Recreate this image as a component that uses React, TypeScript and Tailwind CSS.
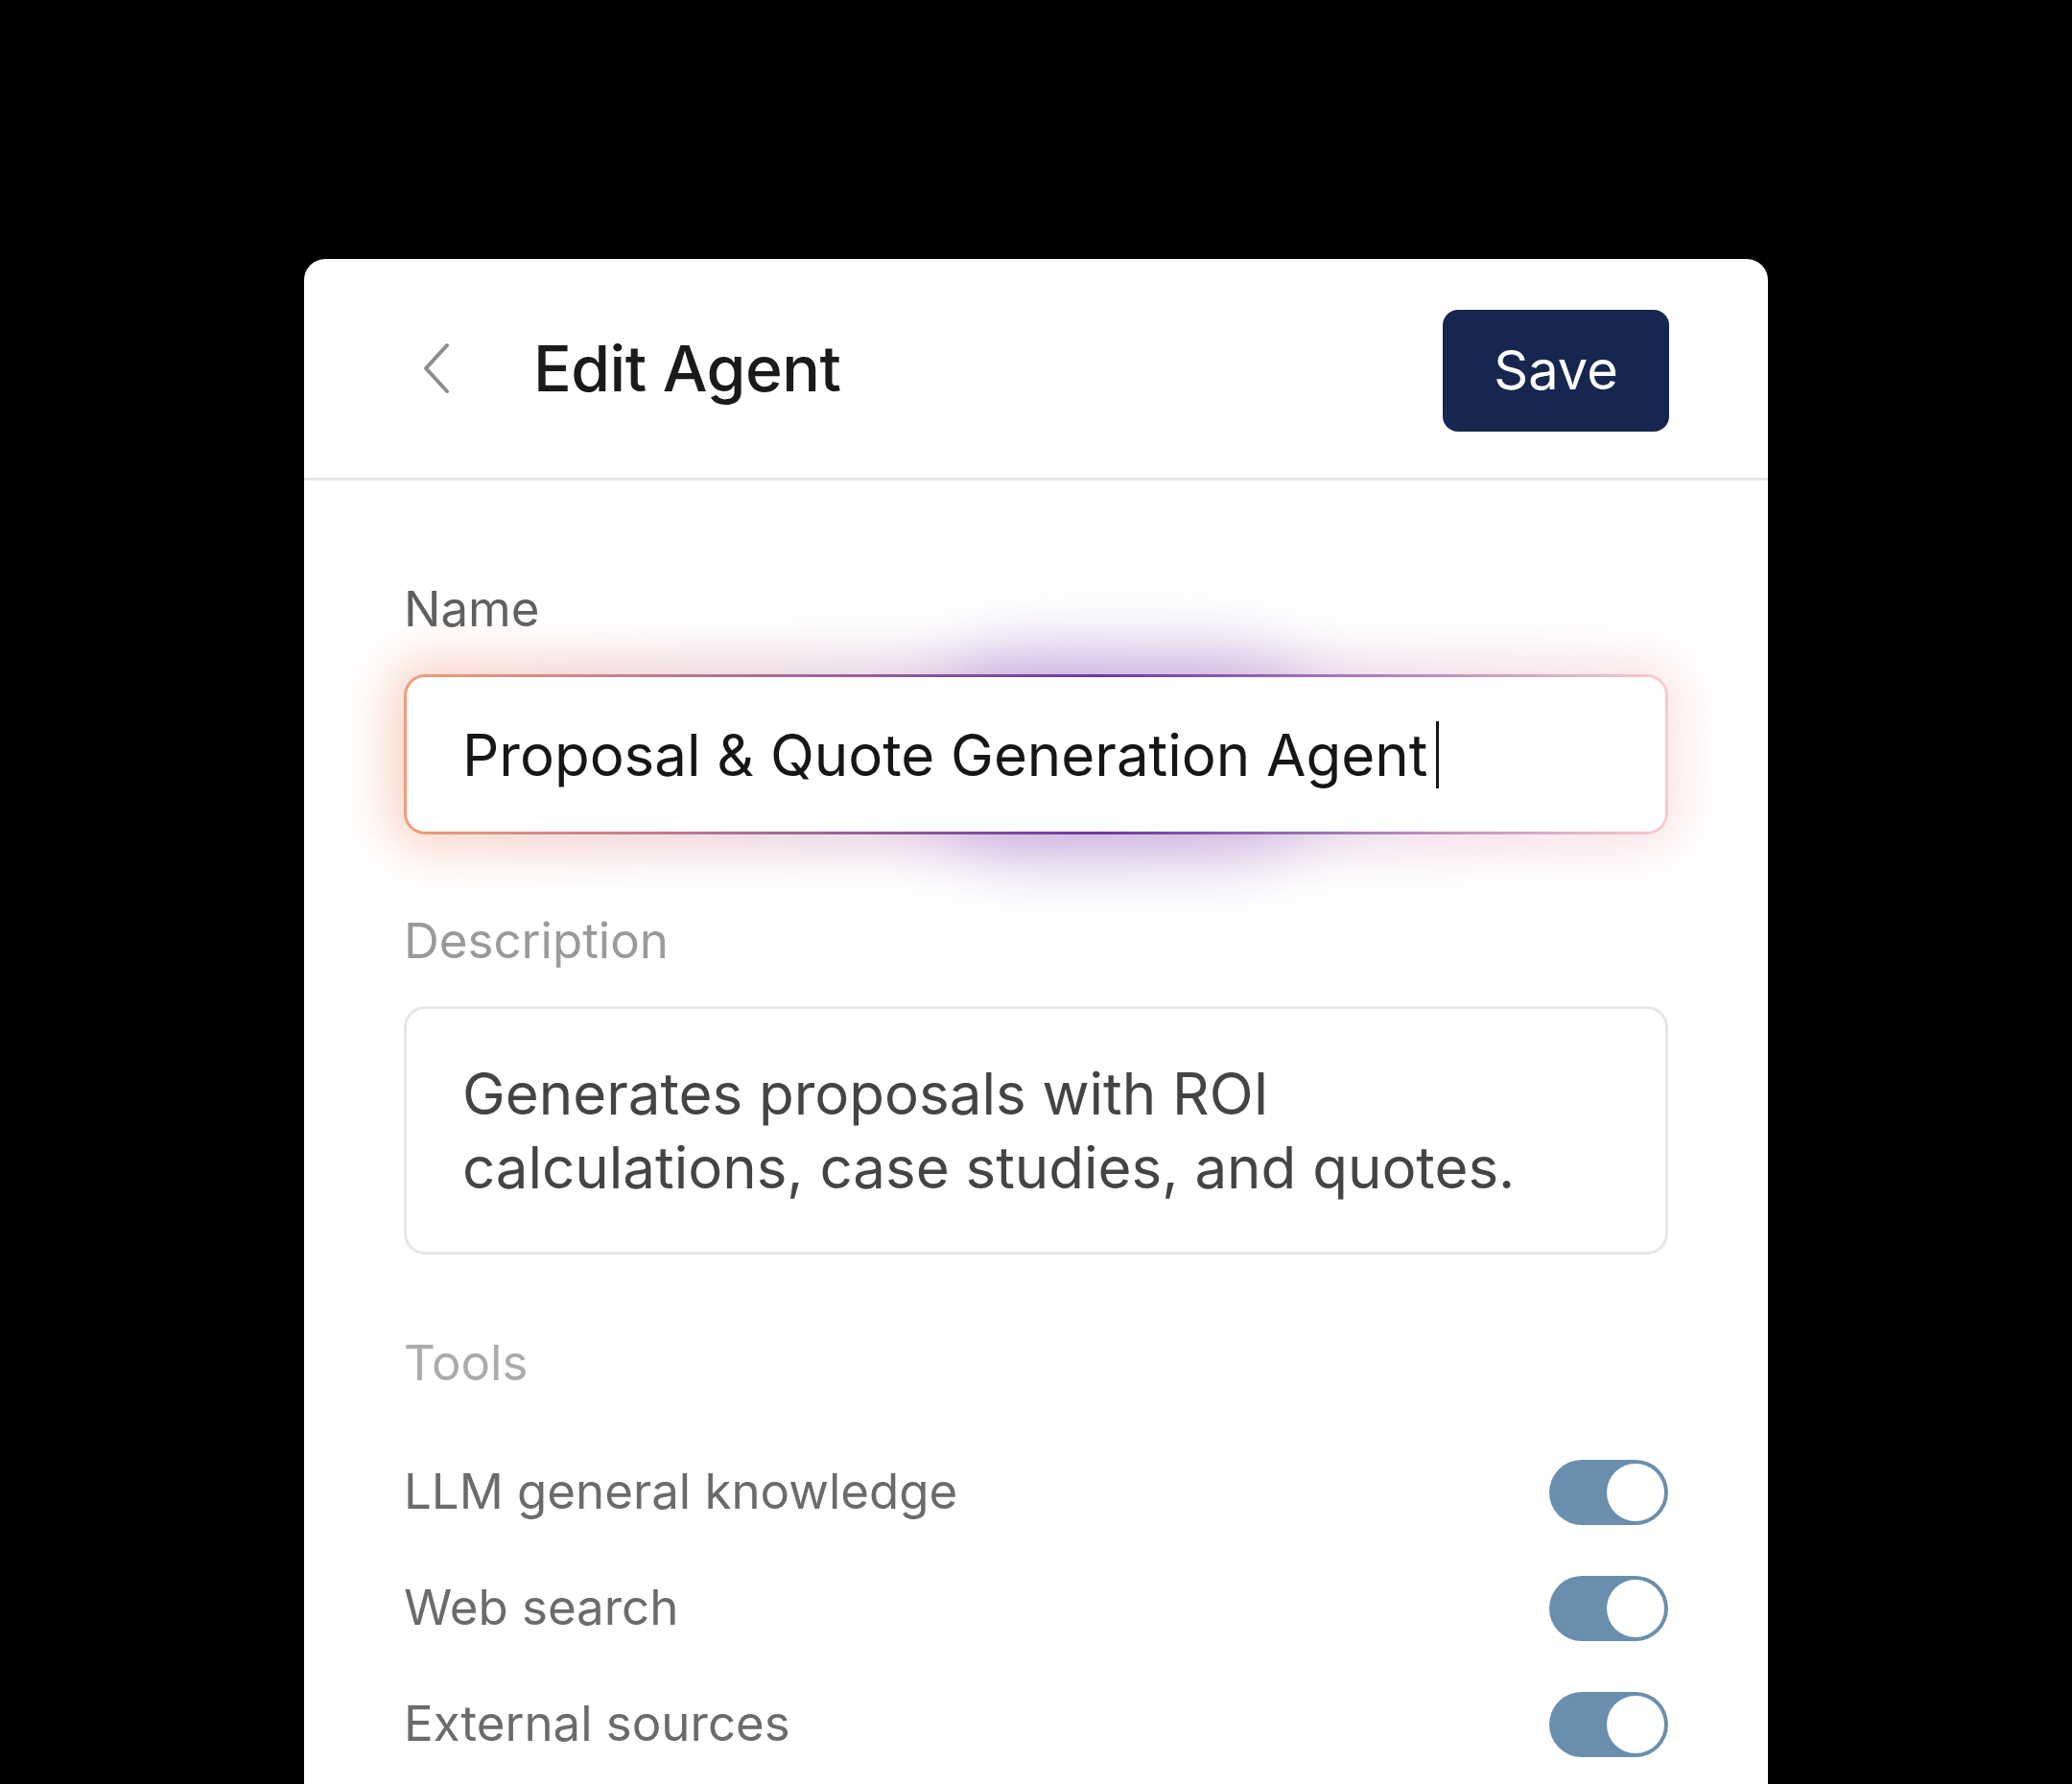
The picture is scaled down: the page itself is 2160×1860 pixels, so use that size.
import React from 'react';

const font = { fontFamily: 'Inter, "Noto Sans", sans-serif' };

/* ── Toggle ───────────────────────────────────────────── */
function Toggle() {
  return (
    <div className="flex h-[68px] w-[124px] items-center justify-end rounded-full bg-[#6a8fae] pr-[4px]">
      <div className="h-[60px] w-[60px] rounded-full bg-white" />
    </div>
  );
}

/* ── Chevron ──────────────────────────────────────────── */
function BackChevron() {
  return (
    <svg width="32" height="56" viewBox="0 0 32 56" fill="none">
      <path d="M28 4 L6 28 L28 52" stroke="#8c8c8c" strokeWidth="4" strokeLinecap="round" strokeLinejoin="round" />
    </svg>
  );
}

const tools = ['LLM general knowledge', 'Web search', 'External sources'];

/* ── Page ─────────────────────────────────────────────── */
export default function App() {
  return (
    <div className="h-[1860px] w-[2160px] overflow-hidden bg-black pt-[270px]" style={font}>
      <div className="mx-auto min-h-[1700px] w-[1526px] rounded-t-[22px] bg-white">
        {/* header */}
        <div className="flex h-[231px] items-center border-b-[3px] border-[#e6e6e6] pl-[121px] pr-[103px]">
          <BackChevron />
          <h1 className="ml-[86px] flex-1 text-[66px] font-medium leading-none tracking-[-0.5px] text-[#1a1a1a]">
            Edit Agent
          </h1>
          <button className="mt-[4px] flex h-[127px] w-[236px] items-center justify-center rounded-[16px] bg-[#17264f] text-[56px] text-white">
            Save
          </button>
        </div>

        {/* form */}
        <div className="px-[104px] pt-[104px]">
          <div className="text-[51px] leading-[60px] text-[#5f5f5f]">Name</div>

          <div className="relative mt-[38px]">
            {/* glow */}
            <div className="absolute -inset-[16px] rounded-[40px] bg-gradient-to-r from-[#f6a07c] via-[#b890d0] to-[#f8c6c6] opacity-45 blur-[26px]" />
            <div className="absolute left-[41%] top-1/2 h-[220px] w-[420px] -translate-y-1/2 rounded-full bg-[#7a48b8] opacity-25 blur-[38px]" />
            <div className="relative rounded-[22px] bg-gradient-to-r from-[#f39c78] via-[#6b3aa0] via-55% to-[#f9cccc] p-[3px]">
              <div className="flex h-[161px] items-center rounded-[19px] bg-white pl-[58px]">
                <span className="text-[60px] leading-none text-[#161616]">Proposal &amp; Quote Generation Agent</span>
                <span className="ml-[9px] h-[70px] w-[3px] bg-[#161616]" />
              </div>
            </div>
          </div>

          <div className="mt-[81px] text-[51px] leading-[60px] text-[#9a9a9a]">Description</div>

          <div className="mt-[38px] flex h-[259px] items-center rounded-[22px] border-[3px] border-[#e6e6e6] pl-[58px] pr-[60px]">
            <p className="text-[60px] leading-[77px] text-[#444444]">
              Generates proposals with ROI
              <br />
              calculations, case studies, and quotes.
            </p>
          </div>

          <div className="mt-[83px] text-[51px] leading-[60px] text-[#ababab]">Tools</div>

          <div className="mt-[44px]">
            {tools.map(t => (
              <div key={t} className="flex h-[121px] items-center justify-between">
                <span className="text-[51px] text-[#6b6b6b]">{t}</span>
                <Toggle />
              </div>
            ))}
          </div>
        </div>
      </div>
    </div>
  );
}
